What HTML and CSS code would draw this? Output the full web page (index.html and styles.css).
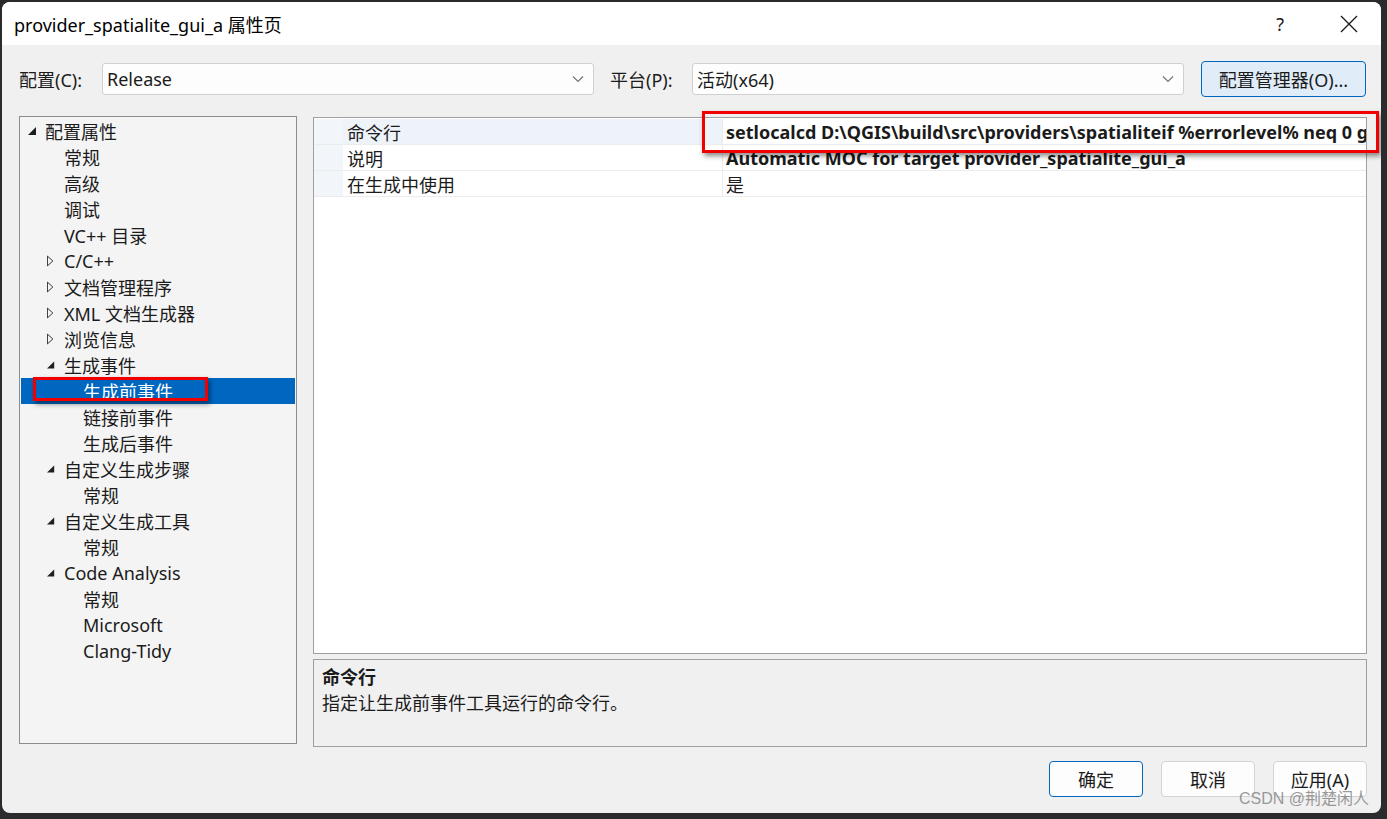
FILE: index.html
```html
<!DOCTYPE html>
<html lang="zh-CN">
<head>
<meta charset="utf-8">
<title>provider_spatialite_gui_a 属性页</title>
<link rel="stylesheet" href="styles.css">
</head>
<body>
<div class="window">
  <div class="titlebar">
    <div class="title">provider_spatialite_gui_a 属性页</div>
    <div class="title-btns">
      <span class="help">?</span>
      <svg class="close" width="18" height="18" viewBox="0 0 18 18"><path d="M1 1L17 17M17 1L1 17" stroke="#1a1a1a" stroke-width="1.3" fill="none"/></svg>
    </div>
  </div>

  <div class="toolbar">
    <label class="tlabel">配置(C):</label>
    <div class="combo">
      <span>Release</span>
      <svg class="chev" width="12" height="8" viewBox="0 0 12 8"><path d="M1 1.5L6 6.5L11 1.5" stroke="#707070" stroke-width="1.1" fill="none"/></svg>
    </div>
    <label class="tlabel tlabel2">平台(P):</label>
    <div class="combo">
      <span>活动(x64)</span>
      <svg class="chev" width="12" height="8" viewBox="0 0 12 8"><path d="M1 1.5L6 6.5L11 1.5" stroke="#707070" stroke-width="1.1" fill="none"/></svg>
    </div>
    <button class="btn mgr">配置管理器(O)...</button>
  </div>

  <div class="main">
    <div class="tree">
      <div class="node l0"><svg class="tw" width="17" height="10" viewBox="0 0 17 10"><path d="M0 9L8 9L8 1Z" fill="#1e1e1e"/></svg>配置属性</div>
      <div class="node l1"><span class="tw"></span>常规</div>
      <div class="node l1"><span class="tw"></span>高级</div>
      <div class="node l1"><span class="tw"></span>调试</div>
      <div class="node l1"><span class="tw"></span>VC++ 目录</div>
      <div class="node l0b"><svg class="tw" width="19" height="12" viewBox="0 0 19 12"><path d="M0.5 0.5L6.5 6L0.5 11.5Z" fill="none" stroke="#1e1e1e" stroke-width="1"/></svg>C/C++</div>
      <div class="node l0b"><svg class="tw" width="19" height="12" viewBox="0 0 19 12"><path d="M0.5 0.5L6.5 6L0.5 11.5Z" fill="none" stroke="#1e1e1e" stroke-width="1"/></svg>文档管理程序</div>
      <div class="node l0b"><svg class="tw" width="19" height="12" viewBox="0 0 19 12"><path d="M0.5 0.5L6.5 6L0.5 11.5Z" fill="none" stroke="#1e1e1e" stroke-width="1"/></svg>XML 文档生成器</div>
      <div class="node l0b"><svg class="tw" width="19" height="12" viewBox="0 0 19 12"><path d="M0.5 0.5L6.5 6L0.5 11.5Z" fill="none" stroke="#1e1e1e" stroke-width="1"/></svg>浏览信息</div>
      <div class="node l0b"><svg class="tw" width="19" height="10" viewBox="0 0 19 10"><path d="M0 9L8 9L8 1Z" fill="#1e1e1e"/></svg>生成事件</div>
      <div class="node l2 selected"><span class="tw"></span>生成前事件<span class="mark"></span></div>
      <div class="node l2"><span class="tw"></span>链接前事件</div>
      <div class="node l2"><span class="tw"></span>生成后事件</div>
      <div class="node l0b"><svg class="tw" width="19" height="10" viewBox="0 0 19 10"><path d="M0 9L8 9L8 1Z" fill="#1e1e1e"/></svg>自定义生成步骤</div>
      <div class="node l2"><span class="tw"></span>常规</div>
      <div class="node l0b"><svg class="tw" width="19" height="10" viewBox="0 0 19 10"><path d="M0 9L8 9L8 1Z" fill="#1e1e1e"/></svg>自定义生成工具</div>
      <div class="node l2"><span class="tw"></span>常规</div>
      <div class="node l0b"><svg class="tw" width="19" height="10" viewBox="0 0 19 10"><path d="M0 9L8 9L8 1Z" fill="#1e1e1e"/></svg>Code Analysis</div>
      <div class="node l2"><span class="tw"></span>常规</div>
      <div class="node l2"><span class="tw"></span>Microsoft</div>
      <div class="node l2"><span class="tw"></span>Clang-Tidy</div>
    </div>

    <div class="right">
      <div class="grid">
        <div class="row sel">
          <div class="margin"></div>
          <div class="name">命令行</div>
          <div class="value">setlocalcd D:\QGIS\build\src\providers\spatialiteif %errorlevel% neq 0 goto :cmEnd</div>
        </div>
        <div class="row">
          <div class="margin"></div>
          <div class="name">说明</div>
          <div class="value">Automatic MOC for target provider_spatialite_gui_a</div>
        </div>
        <div class="row">
          <div class="margin"></div>
          <div class="name">在生成中使用</div>
          <div class="value plain">是</div>
        </div>
        <div class="redbox"></div>
      </div>
      <div class="desc">
        <div class="desc-title">命令行</div>
        <div class="desc-text">指定让生成前事件工具运行的命令行。</div>
      </div>
    </div>
  </div>

  <div class="footer">
    <button class="btn ok">确定</button>
    <button class="btn">取消</button>
    <button class="btn">应用(A)</button>
    <div class="watermark">CSDN @荆楚闲人</div>
  </div>
</div>
</body>
</html>
```

FILE: styles.css
```css
* { box-sizing: border-box; }
html, body { margin: 0; padding: 0; }
body {
  width: 1387px;
  height: 819px;
  background: #2a2b2d;
  overflow: hidden;
  font-family: "Noto Sans", "Noto Sans CJK SC", sans-serif;
  font-size: 18px;
  color: #1b1b1b;
}
.window {
  position: relative;
  margin: 2px 0 0 2px;
  width: 1379px;
  height: 811px;
  background: #f0f0f0;
  border-radius: 8px;
  overflow: hidden;
  display: flex;
  flex-direction: column;
}
.titlebar {
  height: 43px;
  background: #ffffff;
  display: flex;
  align-items: center;
  justify-content: space-between;
  padding-left: 12px;
  flex: none;
}
.title { font-size: 18px; color: #000; }
.title-btns { display: flex; align-items: center; }
.help { font-size: 18px; margin-right: 56px; color: #1a1a1a; }
.close { margin-right: 23px; }

.toolbar {
  display: flex;
  align-items: center;
  height: 36px;
  margin-top: 16px;
  padding-left: 17px;
  flex: none;
}
.tlabel { width: 83px; font-size: 18px; }
.tlabel2 { width: 82px; margin-left: 16px; }
.combo {
  width: 492px;
  height: 32px;
  background: #fdfdfd;
  border: 1px solid #d0d0d0;
  border-radius: 3px;
  display: flex;
  align-items: center;
  justify-content: space-between;
  padding: 0 9px 0 4px;
  font-size: 18px;
}
.btn {
  font-family: inherit;
  font-size: 18px;
  color: #1b1b1b;
  background: #fdfdfd;
  border: 1px solid #d3d3d3;
  border-radius: 4px;
  height: 36px;
  width: 94px;
  padding: 0;
}
.mgr {
  width: 165px;
  margin-left: 17px;
  background: #e0ecf8;
  border-color: #0067c0;
}

.main {
  display: flex;
  margin-top: 19px;
  padding-left: 17px;
  height: 631px;
  flex: none;
}
.tree {
  width: 278px;
  height: 628px;
  background: #f4f4f4;
  border: 1px solid #8c8c8c;
  padding: 1px 1px 0 1px;
  flex: none;
}
.node {
  position: relative;
  height: 26px;
  display: flex;
  align-items: center;
  white-space: nowrap;
  color: #1b1b1b;
  font-size: 18px;
}
.node .tw { flex: none; display: block; width: 17px; }
.l0 { padding-left: 7px; }
.l0b { padding-left: 26px; }
.l0b .tw { width: 17px; }
.l1 { padding-left: 26px; }
.l1 .tw { width: 17px; }
.l2 { padding-left: 45px; }
.selected { background: #0067c0; color: #ffffff; }
.mark {
  position: absolute;
  left: 12px;
  top: -1px;
  width: 175px;
  height: 24px;
  border: 3px solid #f20000;
  box-shadow: 2px 3px 5px rgba(0,0,0,0.45);
}

.right {
  margin-left: 16px;
  width: 1054px;
  display: flex;
  flex-direction: column;
}
.grid {
  position: relative;
  margin-top: 1px;
  height: 538px;
  background: #ffffff;
  border: 1px solid #a0a0a0;
  padding-top: 1px;
}
.row {
  display: flex;
  height: 26px;
  border-bottom: 1px solid #ececec;
  font-size: 18px;
}
.row .margin { width: 29px; flex: none; background: #f2f5fa; }
.row .name {
  width: 380px;
  flex: none;
  padding-left: 4px;
  display: flex;
  align-items: center;
  border-right: 1px solid #ececec;
}
.row.sel .name { background: #eef3fa; }
.row .value {
  flex: 1;
  padding-left: 3px;
  display: flex;
  align-items: center;
  font-weight: bold;
  white-space: nowrap;
  overflow: hidden;
  min-width: 0;
}
.row .value.plain { font-weight: normal; }
.redbox {
  position: absolute;
  left: 388px;
  top: -7px;
  width: 677px;
  height: 42px;
  border: 3px solid #f20000;
  box-shadow: 2px 3px 5px rgba(0,0,0,0.45);
}
.desc {
  margin-top: 5px;
  height: 88px;
  border: 1px solid #a0a0a0;
  background: #f0f0f0;
  padding: 4px 0 0 8px;
}
.desc-title { font-weight: bold; height: 26px; line-height: 26px; }
.desc-text { height: 26px; line-height: 26px; }

.footer {
  position: relative;
  display: flex;
  justify-content: flex-end;
  gap: 18px;
  margin-top: 14px;
  padding-right: 14px;
  flex: none;
}
.ok { border-color: #0067c0; }
.watermark {
  position: absolute;
  right: 12px;
  top: 28px;
  font-size: 16px;
  line-height: 20px;
  color: rgba(120,120,120,0.75);
  font-family: "Liberation Sans", "Noto Sans CJK SC", sans-serif;
}
```
